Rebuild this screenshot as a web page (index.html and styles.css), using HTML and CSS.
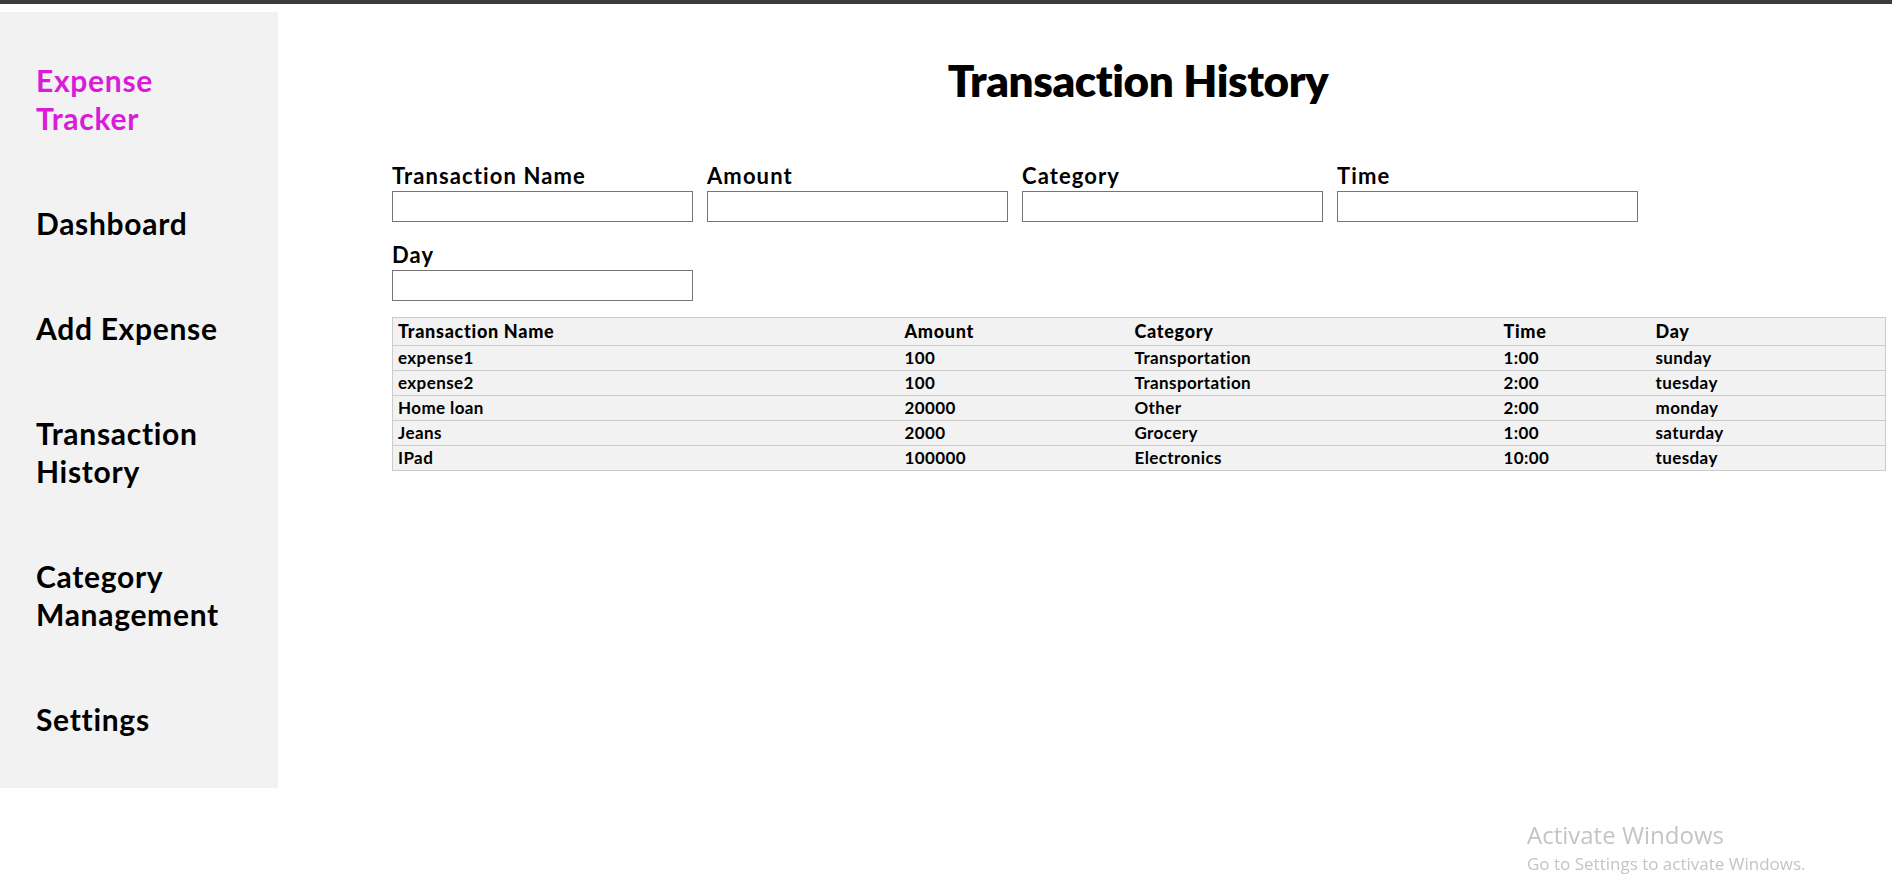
FILE: index.html
```html
<!DOCTYPE html>
<html lang="en">
<head>
<meta charset="utf-8">
<title>Transaction History</title>
<link rel="stylesheet" href="styles.css">
</head>
<body>
<div class="topbar"></div>
<div class="layout">
  <nav class="sidebar">
    <div class="brand">Expense Tracker</div>
    <a class="nav-item" href="#">Dashboard</a>
    <a class="nav-item" href="#">Add Expense</a>
    <a class="nav-item" href="#">Transaction History</a>
    <a class="nav-item" href="#">Category Management</a>
    <a class="nav-item" href="#">Settings</a>
  </nav>
  <main class="main">
    <h1 class="title">Transaction History</h1>
    <form class="filters">
      <div class="field"><label class="field-label">Transaction Name</label><input class="field-input" type="text"></div>
      <div class="field"><label class="field-label">Amount</label><input class="field-input" type="text"></div>
      <div class="field"><label class="field-label">Category</label><input class="field-input" type="text"></div>
      <div class="field"><label class="field-label">Time</label><input class="field-input" type="text"></div>
      <div class="field"><label class="field-label">Day</label><input class="field-input" type="text"></div>
    </form>
    <table class="tx-table">
      <colgroup>
        <col class="c-name"><col class="c-amount"><col class="c-cat"><col class="c-time"><col class="c-day">
      </colgroup>
      <thead>
        <tr><th>Transaction Name</th><th>Amount</th><th>Category</th><th>Time</th><th>Day</th></tr>
      </thead>
      <tbody>
        <tr><td>expense1</td><td>100</td><td>Transportation</td><td>1:00</td><td>sunday</td></tr>
        <tr><td>expense2</td><td>100</td><td>Transportation</td><td>2:00</td><td>tuesday</td></tr>
        <tr><td>Home loan</td><td>20000</td><td>Other</td><td>2:00</td><td>monday</td></tr>
        <tr><td>Jeans</td><td>2000</td><td>Grocery</td><td>1:00</td><td>saturday</td></tr>
        <tr><td>IPad</td><td>100000</td><td>Electronics</td><td>10:00</td><td>tuesday</td></tr>
      </tbody>
    </table>
  </main>
</div>
<div class="watermark">
  <div class="wm-title">Activate Windows</div>
  <div class="wm-sub">Go to Settings to activate Windows.</div>
</div>
</body>
</html>
```

FILE: styles.css
```css
* { box-sizing: border-box; }

html, body {
  margin: 0;
  padding: 0;
  background: #ffffff;
}

body {
  font-family: "Lato", "Noto Sans", sans-serif;
  color: #000;
}

.topbar {
  height: 4px;
  background: #3c3c3c;
}

.layout {
  display: flex;
  align-items: flex-start;
  padding: 8px 8px 0 0;
}

.sidebar {
  width: 278px;
  flex: 0 0 278px;
  background: #f2f2f2;
  display: flex;
  flex-direction: column;
  gap: 67px;
  padding: 49px 16px 50px 36px;
}

.brand,
.nav-item {
  font-size: 30px;
  line-height: 38px;
  font-weight: 700;
  color: #000;
  text-decoration: none;
  letter-spacing: 0.7px;
}

.brand {
  color: #d81cd8;
  width: 150px;
}

.nav-item { display: block; }

.main {
  flex: 1;
  min-width: 0;
  margin-left: 114px;
}

.title {
  margin: 42px 0 0;
  text-align: center;
  font-size: 44px;
  line-height: 52px;
  font-weight: 800;
  letter-spacing: -0.4px;
}

.filters {
  display: flex;
  flex-wrap: wrap;
  column-gap: 14px;
  row-gap: 21px;
  margin: 58px 0 0;
}

.field {
  width: 301px;
  display: flex;
  flex-direction: column;
  gap: 3px;
}

.field-label {
  font-size: 22px;
  line-height: 24px;
  font-weight: 700;
  letter-spacing: 1.1px;
  white-space: nowrap;
}

.field-input {
  width: 301px;
  height: 31px;
  margin: 0;
  border: 1px solid #767676;
  border-radius: 0;
  background: #fff;
  font: inherit;
}

.tx-table {
  width: 100%;
  margin-top: 16px;
  border-collapse: collapse;
  table-layout: fixed;
  background: #f2f2f2;
  border: 1px solid #cccccc;
  font-size: 18px;
}

.c-name { width: 507px; }
.c-amount { width: 230px; }
.c-cat { width: 369px; }
.c-time { width: 152px; }
.c-day { width: 235px; }

.tx-table tr { border-bottom: 1px solid #cccccc; }

.tx-table th {
  text-align: left;
  font-weight: 900;
  padding: 4px 5px;
  line-height: 19px;
  letter-spacing: 0.7px;
  white-space: nowrap;
}

.tx-table td {
  padding: 2px 5px;
  line-height: 20px;
  font-size: 17px;
  font-weight: 700;
  letter-spacing: 0.4px;
  white-space: nowrap;
}

.watermark {
  position: fixed;
  left: 1527px;
  top: 821px;
  color: #c4c4c4;
  font-family: "Open Sans", "Noto Sans", sans-serif;
  pointer-events: none;
}

.wm-title {
  font-size: 24px;
  line-height: 28px;
}

.wm-sub {
  margin-top: 4px;
  font-size: 17px;
  line-height: 22px;
}
```
